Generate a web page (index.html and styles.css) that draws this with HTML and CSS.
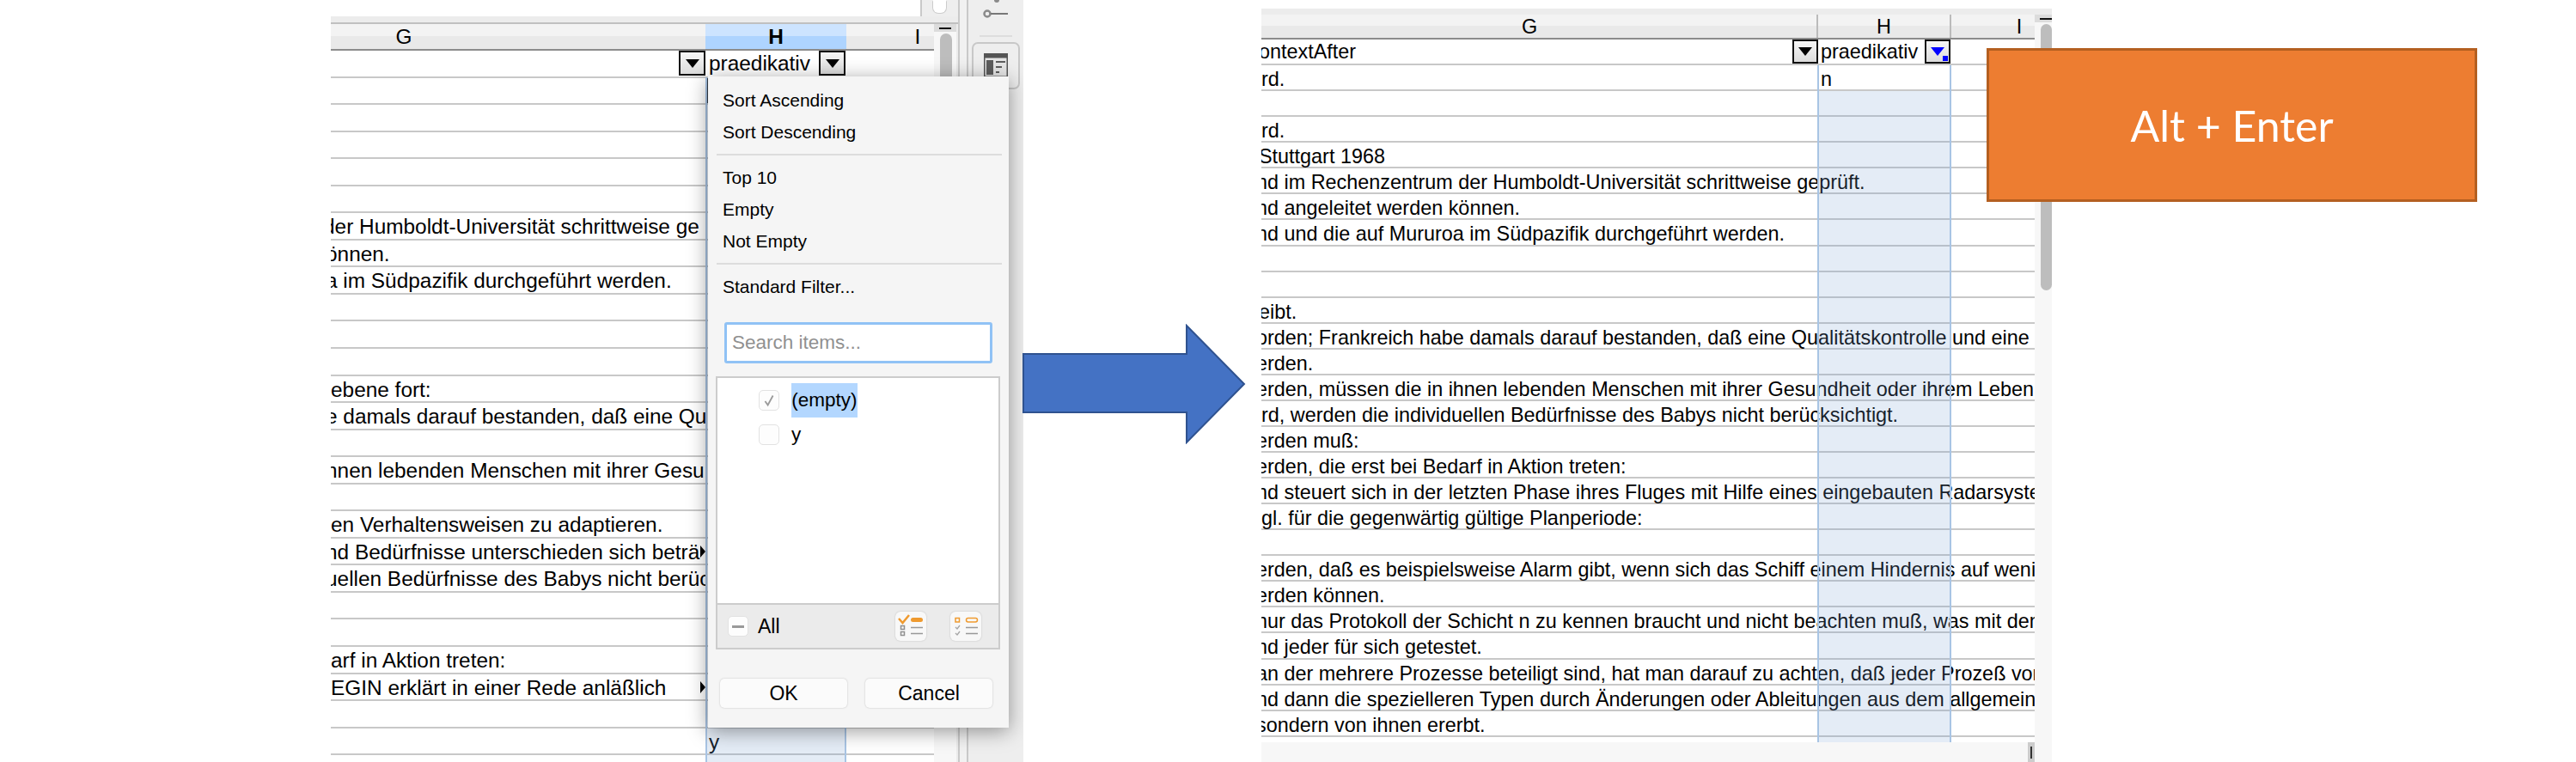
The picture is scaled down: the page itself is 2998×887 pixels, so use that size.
FILE: index.html
```html
<!DOCTYPE html>
<html lang="de">
<head>
  <meta charset="UTF-8">
  <title>Autofilter</title>
  <link rel="stylesheet" href="styles.css">
</head>
<body>

  <main class="slide">

    <!-- Screenshot links: Filter-Popup offen -->
    <section class="sheet sheet-a">
      <div class="work">
        <div class="topstrip">
          <div class="topblank"></div>
          <div class="topchrome"><div class="spin"></div></div>
        </div>
        <div class="band"></div>
        <div class="gridwrap">
          <div class="grid">
            <div class="colhead">
              <div class="col col-g">G</div>
              <div class="col col-h active">H</div>
              <div class="col col-i">I</div>
            </div>
            <div class="rows">
              <div class="row">
                <div class="g filter"><span class="fbtn"><i class="tri"></i></span></div>
                <div class="h filter"><span>praedikativ</span><span class="fbtn"><i class="tri"></i></span></div>
              </div>
              <div class="row"><div class="g"></div><div class="h cursor"></div></div>
              <div class="row"></div>
              <div class="row"></div>
              <div class="row"></div>
              <div class="row"></div>
              <div class="row"><div class="g off9">der Humboldt-Universität schrittweise ge</div></div>
              <div class="row"><div class="g off6">önnen.</div></div>
              <div class="row"><div class="g off6">a im Südpazifik durchgeführt werden.</div></div>
              <div class="row"></div>
              <div class="row"></div>
              <div class="row"></div>
              <div class="row"><div class="g off0">ebene fort:</div></div>
              <div class="row"><div class="g off6">e damals darauf bestanden, daß eine Qu</div></div>
              <div class="row"></div>
              <div class="row"><div class="g off6">nnen lebenden Menschen mit ihrer Gesu</div></div>
              <div class="row"></div>
              <div class="row"><div class="g off0">en Verhaltensweisen zu adaptieren.</div></div>
              <div class="row"><div class="g off6">nd Bedürfnisse unterschieden sich beträ<i class="more"></i></div></div>
              <div class="row"><div class="g off6">uellen Bedürfnisse des Babys nicht berüc</div></div>
              <div class="row"></div>
              <div class="row"></div>
              <div class="row"><div class="g off0">arf in Aktion treten:</div></div>
              <div class="row"><div class="g off0">EGIN erklärt in einer Rede anläßlich<i class="more"></i></div></div>
              <div class="row"><div class="g"></div><div class="h">y</div></div>
              <div class="row"><div class="g"></div><div class="h">y</div></div>
              <div class="row"></div>
              <div class="selcol"></div>
            </div>
          </div>
          <div class="vscroll">
            <div class="vcap"></div>
            <div class="thumb"></div>
          </div>
        </div>
      </div>

      <aside class="sidebar">
        <div class="deck"></div>
        <div class="panel">
          <svg class="slider" width="40" height="32" viewBox="0 0 40 32">
            <circle cx="19" cy="0" r="3" fill="#8a8a8a"/>
            <circle cx="8" cy="16" r="3.5" fill="none" stroke="#8a8a8a" stroke-width="2.5"/>
            <path d="M12 16H32" stroke="#777" stroke-width="2"/>
          </svg>
          <div class="panelrule"></div>
          <div class="panelbtn">
            <svg width="28" height="28" viewBox="0 0 28 28">
              <rect x="0" y="0" width="28" height="28" fill="#555"/>
              <rect x="1.5" y="5.5" width="25" height="21" fill="#e6e6e6"/>
              <rect x="3" y="8" width="8" height="17" fill="#5d5d5d"/>
              <path d="M14 10H25M14 16H21M14 22H18" stroke="#5d5d5d" stroke-width="2"/>
            </svg>
          </div>
        </div>
      </aside>

      <!-- Autofilter-Popup -->
      <div class="popup">
        <div class="menuitem">Sort Ascending</div>
        <div class="menuitem">Sort Descending</div>
        <div class="menusep"></div>
        <div class="menuitem">Top 10</div>
        <div class="menuitem">Empty</div>
        <div class="menuitem">Not Empty</div>
        <div class="menusep"></div>
        <div class="menuitem">Standard Filter...</div>
        <div class="search">Search items...</div>
        <div class="itemlist">
          <div class="listrow">
            <span class="check">
              <svg width="24" height="24" viewBox="0 0 24 24"><path d="M7 13l3.5 5L17 6" fill="none" stroke="#9a9a9a" stroke-width="2"/></svg>
            </span>
            <span class="sel">(empty)</span>
          </div>
          <div class="listrow">
            <span class="check"></span>
            <span class="val">y</span>
          </div>
        </div>
        <div class="listbar">
          <span class="check small"><i class="dash"></i></span>
          <span class="alltext">All</span>
          <span class="iconbtn first">
            <svg width="36" height="34" viewBox="0 0 36 34">
              <path d="M4 8l4.5 5L16 4" fill="none" stroke="#ef9a2f" stroke-width="2.5"/>
              <rect x="18" y="7" width="14" height="5" rx="2.5" fill="#ef9a2f"/>
              <rect x="6.500" y="16.500" width="4" height="4" fill="none" stroke="#8f8f8f" stroke-width="1.500"/>
              <rect x="6.500" y="23.500" width="4" height="4" fill="none" stroke="#8f8f8f" stroke-width="1.500"/>
              <path d="M18 18.500H32M18 25.500H32" stroke="#999" stroke-width="1.500"/>
            </svg>
          </span>
          <span class="iconbtn">
            <svg width="36" height="34" viewBox="0 0 36 34">
              <rect x="6" y="7.500" width="4.500" height="4.500" fill="none" stroke="#ef9a2f" stroke-width="1.500"/>
              <rect x="18.500" y="7.500" width="13" height="4.500" rx="2.200" fill="none" stroke="#ef9a2f" stroke-width="1.500"/>
              <path d="M6 18l2 2 3-4M6 25l2 2 3-4" fill="none" stroke="#a5a5a5" stroke-width="1.300"/>
              <path d="M18 18.500H32M18 25.500H32" stroke="#999" stroke-width="1.500"/>
            </svg>
          </span>
        </div>
        <div class="actions">
          <button class="btn">OK</button>
          <button class="btn">Cancel</button>
        </div>
      </div>
    </section>

    <!-- Screenshot rechts: Ergebnis -->
    <section class="sheet sheet-b">
      <div class="work">
        <div class="band"></div>
        <div class="gridwrap">
          <div class="grid">
            <div class="colhead">
              <div class="col col-g">G</div>
              <div class="col col-h">H</div>
              <div class="col col-i">I</div>
            </div>
            <div class="rows">
              <div class="row">
                <div class="g filter off3"><span>ontextAfter</span><span class="fbtn"><i class="tri"></i></span></div>
                <div class="h filter"><span>praedikativ</span><span class="fbtn on"><i class="tri"></i><i class="dot"></i></span></div>
              </div>
              <div class="row"><div class="g off0">rd.</div><div class="h">n</div></div>
              <div class="row"></div>
              <div class="row"><div class="g off0">rd.</div></div>
              <div class="row"><div class="g off3">Stuttgart 1968</div></div>
              <div class="row"><div class="g off6">nd im Rechenzentrum der Humboldt-Universität schrittweise geprüft.</div></div>
              <div class="row"><div class="g off6">nd angeleitet werden können.</div></div>
              <div class="row"><div class="g off6">nd und die auf Mururoa im Südpazifik durchgeführt werden.</div></div>
              <div class="row"></div>
              <div class="row"></div>
              <div class="row"><div class="g off3">eibt.</div></div>
              <div class="row"><div class="g off6">orden; Frankreich habe damals darauf bestanden, daß eine Qualitätskontrolle und eine</div></div>
              <div class="row"><div class="g off6">erden.</div></div>
              <div class="row"><div class="g off6">erden, müssen die in ihnen lebenden Menschen mit ihrer Gesundheit oder ihrem Leben</div></div>
              <div class="row"><div class="g off0">rd, werden die individuellen Bedürfnisse des Babys nicht berücksichtigt.</div></div>
              <div class="row"><div class="g off6">erden muß:</div></div>
              <div class="row"><div class="g off6">erden, die erst bei Bedarf in Aktion treten:</div></div>
              <div class="row"><div class="g off6">nd steuert sich in der letzten Phase ihres Fluges mit Hilfe eines eingebauten Radarsyste</div></div>
              <div class="row"><div class="g off0">gl. für die gegenwärtig gültige Planperiode:</div></div>
              <div class="row"></div>
              <div class="row"><div class="g off6">erden, daß es beispielsweise Alarm gibt, wenn sich das Schiff einem Hindernis auf weni</div></div>
              <div class="row"><div class="g off6">erden können.</div></div>
              <div class="row"><div class="g off6">nur das Protokoll der Schicht n zu kennen braucht und nicht beachten muß, was mit den</div></div>
              <div class="row"><div class="g off6">nd jeder für sich getestet.</div></div>
              <div class="row"><div class="g off6">an der mehrere Prozesse beteiligt sind, hat man darauf zu achten, daß jeder Prozeß von</div></div>
              <div class="row"><div class="g off6">nd dann die spezielleren Typen durch Änderungen oder Ableitungen aus dem allgemein</div></div>
              <div class="row"><div class="g off6">sondern von ihnen ererbt.</div></div>
              <div class="selcol"></div>
            </div>
          </div>
          <div class="vscroll">
            <div class="vcap"></div>
            <div class="thumb"></div>
          </div>
        </div>
        <div class="hscroll"><div class="htick"></div></div>
      </div>
    </section>

    <svg class="arrow" width="262" height="140" viewBox="0 0 262 140">
      <path d="M1 35H191V2L258 70L191 138V103H1Z" fill="#4472c4" stroke="#2f528f" stroke-width="2"/>
    </svg>

    <div class="callout">Alt + Enter</div>
  </main>

</body>
</html>
```

FILE: styles.css
```css
* {
  box-sizing: border-box;
}

body {
  margin: 0;
  background: white;
  font-family: "Liberation Sans", Arial, sans-serif;
  color: #000;
  overflow: hidden;
}

.slide {
  position: relative;
  display: flex;
  gap: 277px;
  width: 2998px;
  height: 887px;
  padding-left: 385px;
  overflow: hidden;
}

/* screenshots */
.sheet {
  position: relative;
  display: flex;
  height: 887px;
  overflow: hidden;
  flex: none;
}

.sheet-a {
  --row: 31.55px;
  width: 806px;
  font-size: 24.4px;
}

.sheet-b {
  --row: 30.07px;
  width: 920px;
  padding-top: 10px;
  font-size: 23.4px;
}

.work {
  display: flex;
  flex-direction: column;
  flex: 1;
  min-width: 0;
}

.sheet-a .work {
  flex: none;
  width: 730px;
}

.topstrip {
  display: flex;
  height: 19px;
}

.topblank {
  flex: 1;
}

.topchrome {
  width: 44px;
  padding-left: 12px;
  background: #eee;
  border-left: 2px solid #c9c9c9;
}

.spin {
  width: 17px;
  height: 16px;
  background: white;
  border: 1px solid #ccc;
  border-top: 2px solid #fff;
  border-radius: 0 0 7px 7px;
}

.band {
  background: #ececec;
  border-bottom: 2px solid #c0c0c0;
}

.sheet-a .band {
  height: 9px;
}

.sheet-b .band {
  height: 7px;
  border-bottom: 0;
}

.gridwrap {
  display: flex;
  flex: 1;
  min-height: 0;
}

.grid {
  flex: 1;
  min-width: 0;
  overflow: hidden;
}

/* column headers */
.colhead {
  display: flex;
  background: linear-gradient(#f3f3f3 50%, #e9e9e9 50%);
  border-bottom: 2px solid #8c8c8c;
}

.sheet-a .colhead {
  height: 31px;
}

.sheet-b .colhead {
  height: 29px;
}

.col {
  flex: none;
  line-height: 29px;
  text-align: center;
}

.sheet-a .col-g {
  width: 702px;
  margin-left: -266px;
}

.sheet-a .col-h {
  width: 164px;
}

.sheet-a .col-i {
  width: 166px;
}

.sheet-b .col-g {
  width: 670px;
  margin-left: -22px;
  border-right: 2px solid #bbb;
}

.sheet-b .col-h {
  width: 155px;
  border-right: 2px solid #bbb;
}

.sheet-b .col-i {
  width: 158px;
}

.col.active {
  font-weight: bold;
  background: linear-gradient(#cde4ff 50%, #aed4ff 50%);
}

/* cells */
.rows {
  position: relative;
}

.row {
  display: flex;
  height: var(--row);
  line-height: var(--row);
  border-bottom: 2px solid #c8c8c8;
  white-space: nowrap;
}

.sheet-b .row {
  line-height: calc(var(--row) + 2px);
}

.g {
  flex: none;
}

.sheet-a .g {
  width: 436px;
  position: relative;
  overflow: hidden;
}

.sheet-a .h {
  width: 164px;
  padding-left: 4px;
}

.sheet-b .g {
  width: 648px;
}

.sheet-b .h {
  width: 155px;
  padding-left: 3px;
}

.off0 {
  text-indent: 0;
}

.off3 {
  text-indent: -3px;
}

.off6 {
  text-indent: -6px;
}

.off9 {
  text-indent: -9px;
}

.filter {
  display: flex;
  justify-content: space-between;
  align-items: center;
}

.g.filter {
  justify-content: flex-end;
}

.g.filter span:first-child:not(.fbtn) {
  margin-right: auto;
}

.h.filter {
  padding-right: 1px;
}

.fbtn {
  position: relative;
  display: flex;
  align-items: center;
  justify-content: center;
  width: 31px;
  height: 29px;
  background: linear-gradient(#f6f6f6, #dcdcdc);
  border: 2px solid #111;
  flex: none;
}

.sheet-b .fbtn {
  width: 30px;
  height: 28px;
}

.tri {
  width: 0;
  height: 0;
  border-left: 8px solid transparent;
  border-right: 8px solid transparent;
  border-top: 10px solid #000;
}

.fbtn.on .tri {
  border-top-color: #0000ff;
}

.dot {
  position: absolute;
  right: 1px;
  bottom: 1px;
  width: 6px;
  height: 6px;
  background: #0000ff;
}

.more {
  position: absolute;
  right: 0;
  top: 8px;
  width: 0;
  height: 0;
  border-top: 7px solid transparent;
  border-bottom: 7px solid transparent;
  border-left: 6px solid #000;
}

.cursor {
  border-left: 2px solid #222;
  margin-left: 1px;
}

.selcol {
  position: absolute;
  border-left: 2px solid #a8c4e4;
  border-right: 2px solid #a8c4e4;
  pointer-events: none;
}

.sheet-a .selcol {
  left: 436px;
  top: 31px;
  bottom: 0;
  width: 164px;
  background: rgba(120, 160, 210, 0.2);
}

.sheet-b .selcol {
  left: 647px;
  top: 30px;
  height: 788px;
  width: 156px;
  background: linear-gradient(transparent 30px, rgba(120, 160, 210, 0.2) 30px);
}

/* scrollbars */
.vscroll {
  position: relative;
  flex: none;
  background: #f7f7f7;
}

.sheet-a .vscroll {
  width: 28px;
  padding-right: 2px;
  background: linear-gradient(90deg, #f7f7f7 26px, #ececec 26px);
}

.sheet-b .vscroll {
  width: 20px;
}

.vcap {
  height: 9px;
  background: #dcdcdc;
  position: relative;
}

.vcap::after {
  content: "";
  position: absolute;
  left: 6px;
  top: 4px;
  width: 14px;
  height: 2px;
  background: #111;
}

.thumb {
  margin-top: 2px;
  background: #bdbdbd;
  border-radius: 7px 7px 0 0;
}

.sheet-a .thumb {
  width: 14px;
  height: 300px;
  margin-left: 7px;
}

.sheet-b .thumb {
  width: 13px;
  height: 310px;
  margin-left: 7px;
  border-radius: 7px;
}

.hscroll {
  display: flex;
  justify-content: flex-end;
  height: 23px;
  padding-right: 20px;
  background: #f7f7f7;
}

.htick {
  width: 8px;
  background: #ccc;
  border-left: 2px solid #ccc;
  position: relative;
}

.htick::after {
  content: "";
  position: absolute;
  left: 1px;
  top: 5px;
  width: 2px;
  height: 14px;
  background: #333;
}

/* sidebar */
.sidebar {
  display: flex;
  flex: 1;
  background: #eee;
}

.deck {
  width: 12px;
  background: #f1f1f1;
  border-left: 2px solid #c9c9c9;
  border-right: 2px solid #c9c9c9;
}

.panel {
  flex: 1;
  display: flex;
  flex-direction: column;
  align-items: center;
}

.slider {
  flex: none;
  margin-left: 4px;
}

.panelrule {
  width: 38px;
  height: 2px;
  margin-top: 9px;
  background: #ddd;
}

.panelbtn {
  display: flex;
  justify-content: center;
  width: 56px;
  height: 55px;
  margin-top: 6px;
  padding-top: 11px;
  border: 2px solid #c8c8c8;
  border-radius: 7px;
}

/* popup */
.popup {
  position: absolute;
  left: 439px;
  top: 89px;
  width: 350px;
  height: 758px;
  padding-top: 9px;
  background: #f5f5f5;
  box-shadow: 0 4px 22px rgba(0, 0, 0, 0.4);
  font-size: 21px;
  display: flex;
  flex-direction: column;
}

.menuitem {
  height: 37px;
  line-height: 37px;
  padding-left: 17px;
}

.menusep {
  height: 2px;
  margin: 7px 8px 7px 10px;
  background: #ddd;
}

.search {
  width: 312px;
  height: 48px;
  margin: 23px 0 0 19px;
  padding-left: 6px;
  font-size: 22.5px;
  line-height: 41px;
  color: #909090;
  background: white;
  border: 3px solid #90c2f5;
  border-radius: 3px;
}

.itemlist {
  flex: none;
  width: 331px;
  height: 264px;
  margin: 15px 0 0 9px;
  padding-top: 6px;
  font-size: 22.5px;
  background: white;
  border: 2px solid #ccc;
  border-bottom: 0;
}

.listrow {
  display: flex;
  align-items: center;
  gap: 14px;
  height: 40px;
  padding-left: 48px;
}

.check {
  display: flex;
  align-items: center;
  justify-content: center;
  width: 24px;
  height: 24px;
  background: #fdfdfd;
  border: 1px solid #e2e2e2;
  border-radius: 5px;
  flex: none;
}

.sel {
  align-self: stretch;
  line-height: 40px;
  background: #b3d7ff;
  width: 77px;
  text-align: center;
}

.listbar {
  display: flex;
  align-items: center;
  width: 331px;
  height: 54px;
  margin-left: 9px;
  padding-left: 12px;
  background: #ebebeb;
  border: 2px solid #ccc;
}

.dash {
  width: 14px;
  height: 3px;
  background: #999;
}

.alltext {
  margin-left: 11px;
  font-size: 23px;
}

.iconbtn {
  width: 36px;
  height: 34px;
  margin-left: 28px;
  background: #f8f8f8;
  border-radius: 6px;
  box-shadow: 0 0 2px #bbb;
}

.iconbtn svg {
  display: block;
}

.iconbtn.first {
  margin-left: auto;
}

.iconbtn:last-child {
  margin-right: 20px;
}

.actions {
  display: flex;
  gap: 21px;
  margin: 34px 0 0 14px;
}

.btn {
  width: 148px;
  height: 34px;
  padding: 0;
  font: 23px "Liberation Sans", Arial, sans-serif;
  color: #000;
  background: #fbfbfb;
  border: 0;
  border-radius: 5px;
  box-shadow: 0 0 2px #bbb;
}

/* folien-elemente */
.arrow {
  position: absolute;
  left: 1190px;
  top: 377px;
}

.callout {
  position: absolute;
  left: 2312px;
  top: 56px;
  display: flex;
  align-items: center;
  justify-content: center;
  width: 571px;
  height: 179px;
  font-family: Lato, sans-serif;
  font-weight: 400;
  font-size: 50px;
  color: white;
  background: #ed7d31;
  border: 3px solid #b45f20;
}
```
